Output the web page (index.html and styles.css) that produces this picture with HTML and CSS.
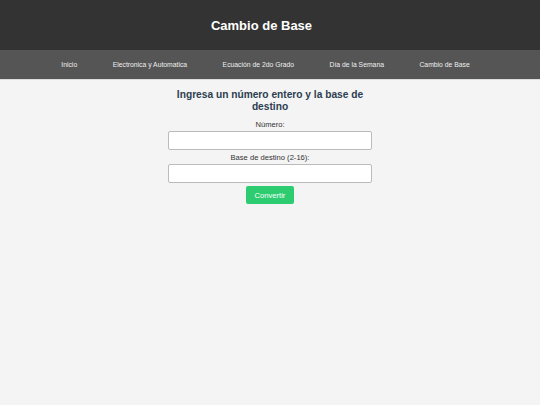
FILE: index.html
```html
<!DOCTYPE html>
<html lang="es">
<head>
<meta charset="utf-8">
<title>Cambio de Base</title>
<link rel="stylesheet" href="styles.css">
</head>
<body>
<header class="site-header">
  <h1 class="site-title">Cambio de Base</h1>
</header>
<nav class="main-nav">
  <a href="#">Inicio</a>
  <a href="#">Electronica y Automatica</a>
  <a href="#">Ecuación de 2do Grado</a>
  <a href="#">Día de la Semana</a>
  <a href="#">Cambio de Base</a>
</nav>
<main class="content">
  <h2 class="form-title">Ingresa un número entero y la base de destino</h2>
  <form class="convert-form">
    <label for="numero">Número:</label>
    <input id="numero" type="text">
    <label for="base">Base de destino (2-16):</label>
    <input id="base" type="text">
    <button type="button" class="btn">Convertir</button>
  </form>
</main>
</body>
</html>
```

FILE: styles.css
```css
html, body {
  margin: 0;
  padding: 0;
  height: 100%;
}
body {
  background: #f4f4f4;
  font-family: "Liberation Sans", Arial, sans-serif;
  color: #333;
}
.site-header {
  background: #333;
  height: 50px;
  display: flex;
  align-items: center;
  justify-content: center;
  padding-right: 17px;
}
.site-title {
  margin: 0;
  color: #fff;
  font-size: 13px;
  font-weight: bold;
}
.main-nav {
  background: #555;
  height: 29px;
  border-bottom: 1px solid #ddd;
  display: flex;
  align-items: center;
  justify-content: center;
  gap: 35.5px;
  padding-right: 9px;
}
.main-nav a {
  color: #eee;
  text-decoration: none;
  font-size: 6.8px;
}
.content {
  width: 204px;
  margin: 0 auto;
  padding-top: 9px;
  text-align: center;
}
.form-title {
  margin: 0 0 7px;
  font-size: 10.2px;
  line-height: 12px;
  color: #2c3e50;
  font-weight: bold;
}
.convert-form {
  display: flex;
  flex-direction: column;
  align-items: center;
}
.convert-form label {
  font-size: 7.6px;
  line-height: 9px;
  margin-bottom: 2px;
  color: #333;
}
.convert-form input {
  box-sizing: border-box;
  width: 204px;
  height: 19px;
  border: 1px solid #bbb;
  border-radius: 2px;
  background: #fff;
  margin: 0 0 3px;
  padding: 0 4px;
}
.btn {
  margin-top: 0;
  width: 48px;
  height: 18px;
  background: #2ecc71;
  color: #fff;
  border: none;
  border-radius: 2px;
  font-family: "Liberation Sans", Arial, sans-serif;
  font-size: 7.6px;
  padding: 0;
}
```
